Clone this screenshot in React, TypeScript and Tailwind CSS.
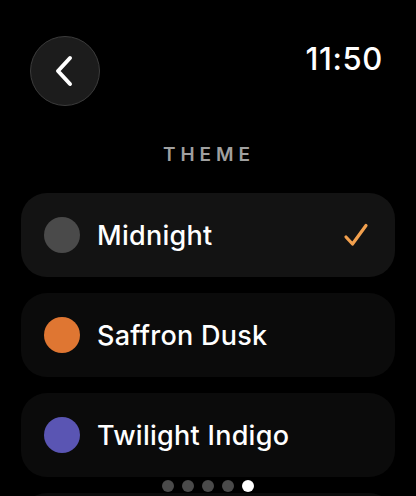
import React from "react"

const themes = [
  { name: "Midnight", color: "bg-[#4a4a4a]", selected: true },
  { name: "Saffron Dusk", color: "bg-[#df7632]", selected: false },
  { name: "Twilight Indigo", color: "bg-[#5a55b3]", selected: false },
]

export default function App() {
  return (
    <div
      className="relative w-[416px] h-[496px] overflow-hidden bg-black text-white"
      style={{ fontFamily: "Inter, 'Noto Sans', sans-serif" }}
    >
      {/* Top bar */}
      <div className="flex items-start justify-between pl-[30px] pr-[33px] pt-[36px]">
        <button className="flex h-[70px] w-[70px] items-center justify-center rounded-full border-[1.5px] border-[#3c3c3c] bg-[#1c1c1c]">
          <svg width="22" height="32" viewBox="0 0 22 32" fill="none" className="-ml-[2px]">
            <path d="M17 3 L5 16 L17 29" stroke="white" strokeWidth="4" strokeLinecap="round" strokeLinejoin="round" />
          </svg>
        </button>
        <div className="mt-[-1px] text-[31px] font-medium leading-[48px] tracking-[0.02em]">11:50</div>
      </div>

      {/* Title */}
      <div className="mt-[35px] pl-[2px] text-center text-[19px] font-semibold leading-[28px] tracking-[0.26em] text-[#a0a0a0]">
        THEME
      </div>

      {/* Options */}
      <div className="mt-[24px] flex flex-col gap-4 px-[21px]">
        {themes.map((t) => (
          <div
            key={t.name}
            className={`flex h-[84px] items-center rounded-[26px] pl-[23px] pr-[26px] ${
              t.selected ? "bg-[#131313]" : "bg-[#0b0b0b]"
            }`}
          >
            <div className={`h-9 w-9 shrink-0 rounded-full ${t.color}`} />
            <div className="ml-[17px] flex-1 text-[27px] font-medium leading-none tracking-[0.01em]">{t.name}</div>
            {t.selected && (
              <svg width="26" height="26" viewBox="0 0 26 26" fill="none">
                <path d="M3 15 L9.5 22 L23 3.5" stroke="#f2a04e" strokeWidth="3.2" strokeLinecap="round" strokeLinejoin="round" />
              </svg>
            )}
          </div>
        ))}
        {/* next option, scrolled out of view */}
        <div className="h-[84px] rounded-[26px] bg-[#0b0b0b]" />
      </div>

      {/* Page dots */}
      <div className="absolute bottom-[4px] left-0 right-0 flex justify-center gap-2">
        <div className="h-3 w-3 rounded-full bg-[#4a4a4a]" />
        <div className="h-3 w-3 rounded-full bg-[#4a4a4a]" />
        <div className="h-3 w-3 rounded-full bg-[#4a4a4a]" />
        <div className="h-3 w-3 rounded-full bg-[#4a4a4a]" />
        <div className="h-3 w-3 rounded-full bg-white" />
      </div>
    </div>
  )
}
